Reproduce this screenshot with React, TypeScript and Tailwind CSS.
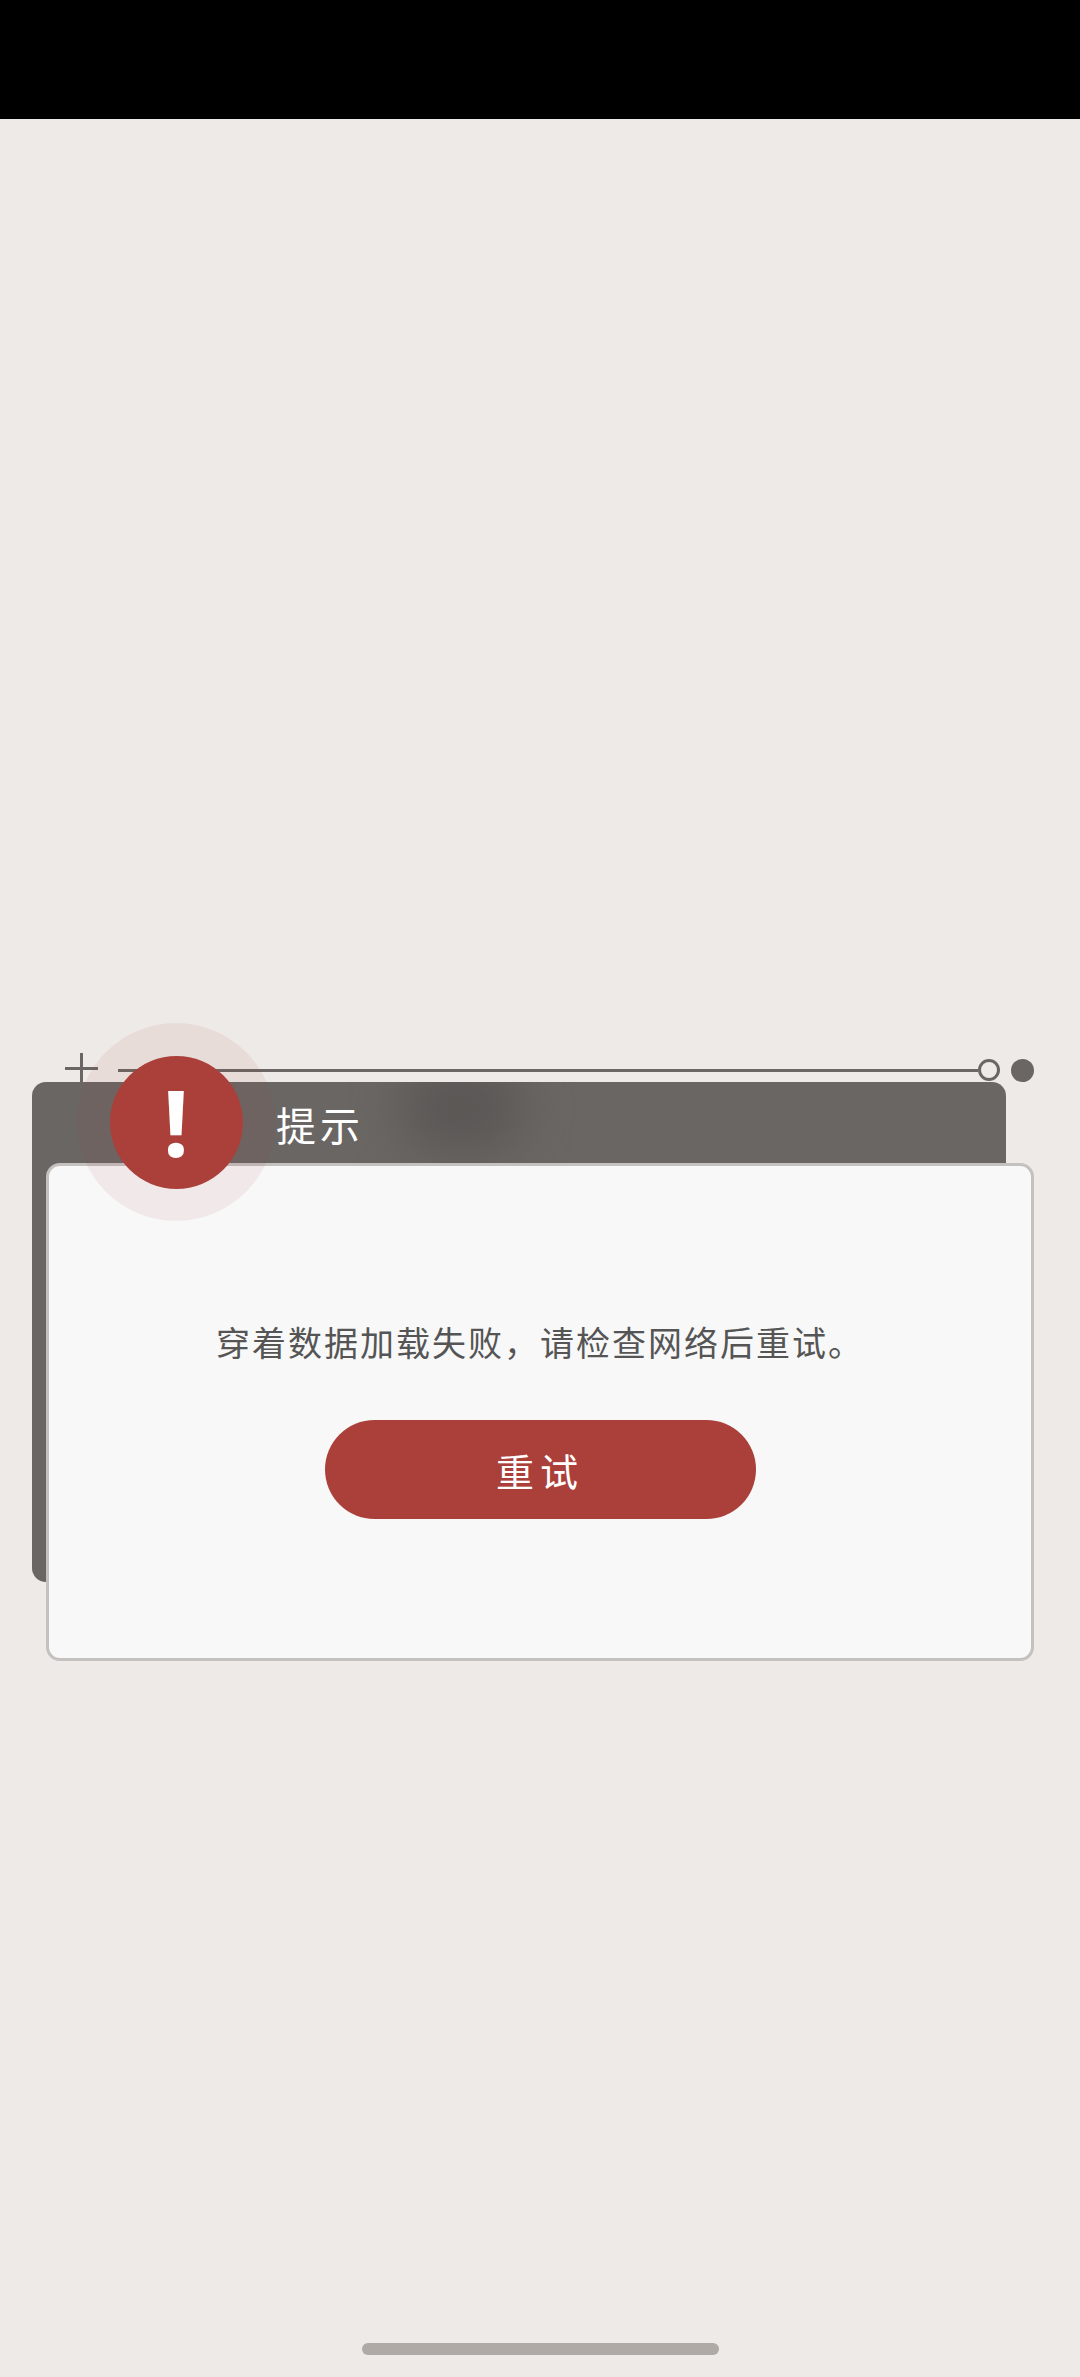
const cjk = { fontFamily: '"Noto Sans CJK SC", "Noto Sans", sans-serif' };

export default function App() {
  return (
    <div className="flex h-[2377px] w-[1080px] flex-col overflow-hidden bg-[#eeeae7]" style={cjk}>
      <div className="h-[119px] shrink-0 bg-black" />

      <main className="relative flex-1 pt-[939px]">
        {/* line above the panel */}
        <div className="relative z-10 flex h-[24px] items-center pr-[46px]">
          <div className="relative ml-[65px] h-[34px] w-[33px]">
            <span className="absolute left-0 top-[14px] h-[3px] w-[33px] bg-[#6b6663]" />
            <span className="absolute left-[15px] top-0 h-[34px] w-[3px] bg-[#6b6663]" />
          </div>
          <div className="ml-[20px] h-[3px] flex-1 bg-[#6b6663]" />
          <div className="h-[22px] w-[22px] rounded-full border-[3px] border-[#6b6663]" />
          <div className="ml-[11px] h-[23px] w-[23px] rounded-full bg-[#6b6663]" />
        </div>

        <div className="relative ml-[32px] h-[500px] w-[974px] overflow-hidden rounded-[14px] bg-[#6a6663]">
          <div className="absolute left-[370px] top-[-20px] h-[90px] w-[120px] rounded-full bg-[#5b5755] blur-[24px]" />
          <p className="relative pl-[244px] pt-[14px] text-[40px] leading-[56px] tracking-[4px] text-white">提示</p>
        </div>

        {/* card */}
        <div className="relative z-10 ml-[46px] mt-[-419px] flex h-[498px] w-[988px] flex-col items-center rounded-[14px] border-[3px] border-[#c4c1be] bg-[#f8f8f8] pt-[152px]">
          <p className="text-[34px] leading-[48px] tracking-[2px] text-[#555555]">穿着数据加载失败，请检查网络后重试。</p>
          <button className="mt-[54px] h-[99px] w-[431px] rounded-full bg-[#ab403b] text-[38px] tracking-[6px] text-white">重试</button>
        </div>

        {/* warning badge */}
        <div className="absolute left-[77px] top-[904px] z-20 flex h-[198px] w-[198px] items-center justify-center rounded-full bg-[#ab403b]/[0.08]">
          <div className="flex h-[133px] w-[133px] items-center justify-center rounded-full bg-[#ab403b] text-[92px] font-bold leading-none text-white" style={{ fontFamily: '"Noto Sans", sans-serif' }}>!</div>
        </div>

        <div className="absolute bottom-[22px] left-[362px] h-[12px] w-[357px] rounded-full bg-[#afaaa6]" />
      </main>
    </div>
  );
}
